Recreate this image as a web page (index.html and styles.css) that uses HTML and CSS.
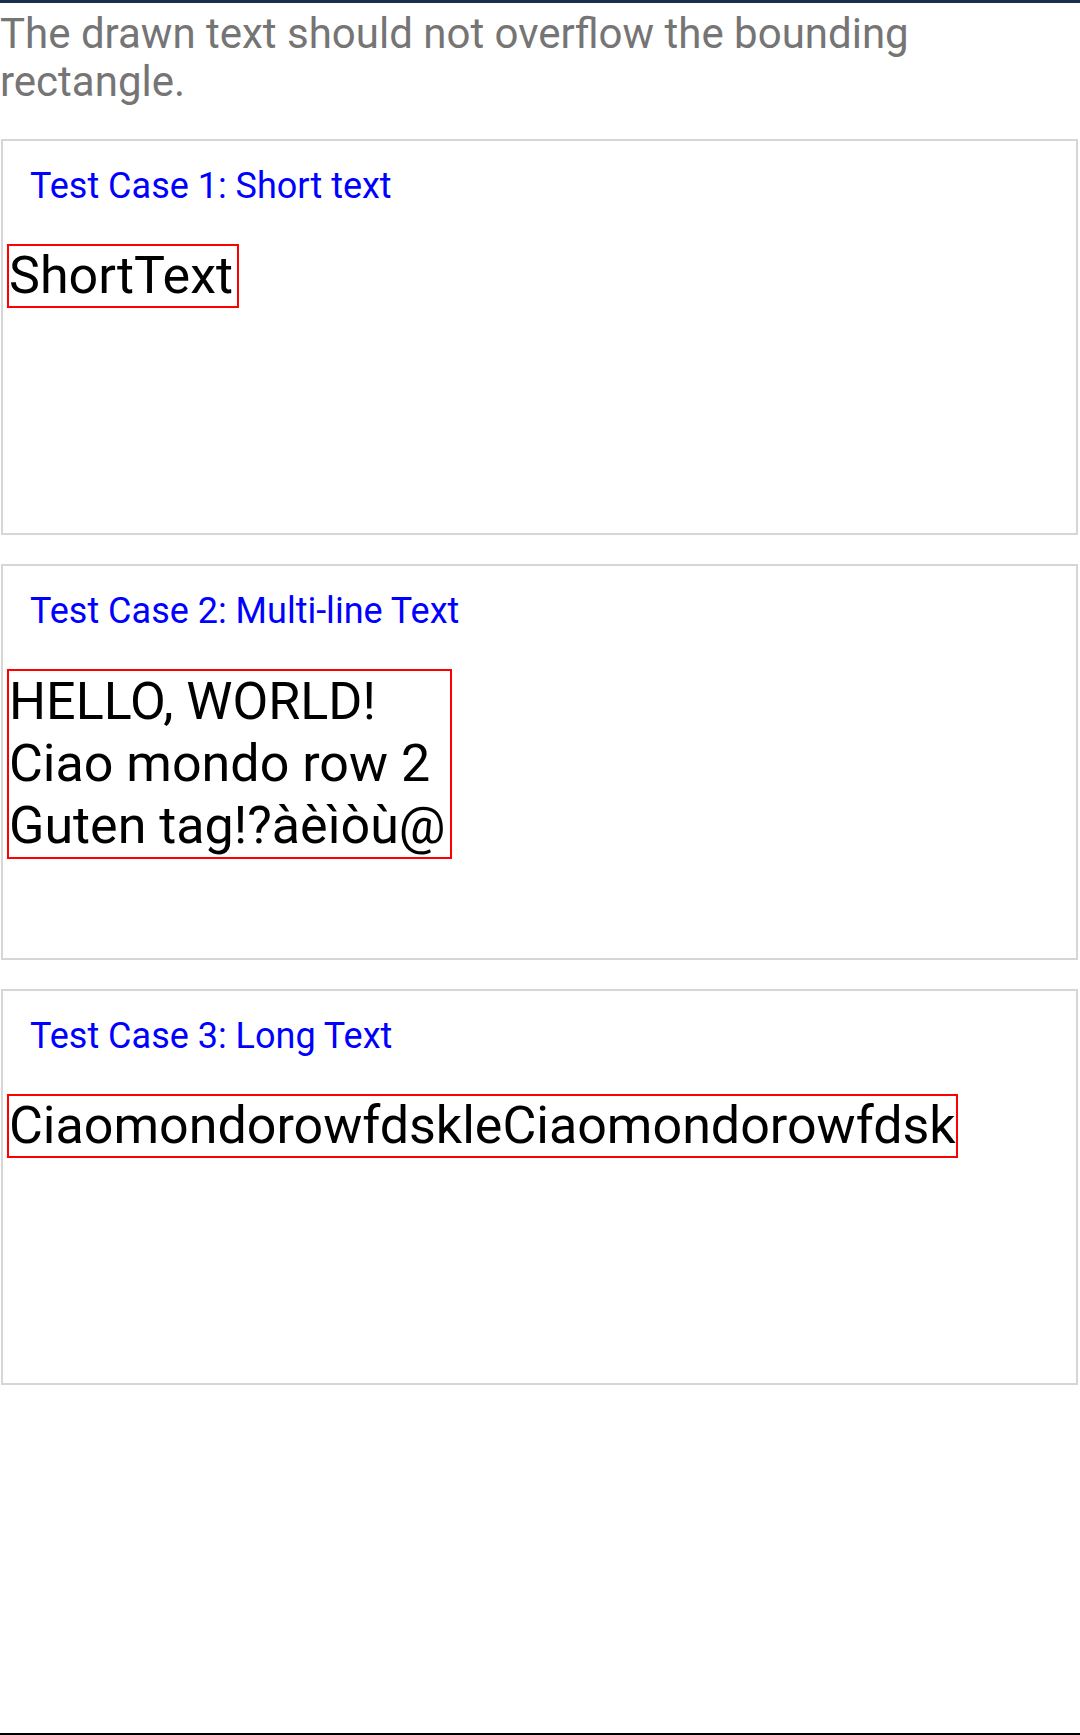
FILE: index.html
```html
<!DOCTYPE html>
<html lang="en">
<head>
<meta charset="utf-8">
<title>Text bounding test</title>
<link rel="stylesheet" href="styles.css">
</head>
<body>
<div class="page">
  <p class="intro">The drawn text should not overflow the bounding rectangle.</p>
  <section class="case">
    <h2 class="case-title">Test Case 1: Short text</h2>
    <div class="sample"><span class="bound padded">ShortText</span></div>
  </section>
  <section class="case">
    <h2 class="case-title">Test Case 2: Multi-line Text</h2>
    <div class="sample"><span class="bound padded multi">HELLO, WORLD!<br>Ciao mondo row 2<br>Guten tag!?àèìòù@</span></div>
  </section>
  <section class="case">
    <h2 class="case-title">Test Case 3: Long Text</h2>
    <div class="sample"><span class="bound">CiaomondorowfdskleCiaomondorowfdsk</span></div>
  </section>
</div>
</body>
</html>
```
FILE: styles.css
```css
html, body {
  margin: 0;
  padding: 0;
  background: #ffffff;
}

body {
  font-family: Roboto, "Noto Sans", "Liberation Sans", sans-serif;
}

.page {
  box-sizing: border-box;
  min-height: 100vh;
  border-top: 3px solid #1b2e4b;
  border-bottom: 2px solid #000000;
  display: flex;
  flex-direction: column;
  gap: 29px;
}

.intro {
  margin: 7px 0 0 0;
  font-size: 42px;
  line-height: 48px;
  color: #757575;
}

.case {
  box-sizing: border-box;
  margin-left: 1px;
  width: 1077px;
  height: 396px;
  border: 2px solid #d6d6d6;
  padding-top: 24px;
}

.case:first-of-type {
  margin-top: 4px;
}

.case-title {
  margin: 0 0 37px 27px;
  font-size: 36px;
  line-height: 42px;
  font-weight: 400;
  color: #0000ff;
}

.sample {
  padding-left: 4px;
}

.bound {
  display: inline-block;
  border: 2px solid #ff0000;
  font-size: 52px;
  line-height: 60px;
  color: #000000;
  white-space: nowrap;
}

.padded {
  padding-right: 4px;
}

.multi {
  line-height: 62px;
}
```
